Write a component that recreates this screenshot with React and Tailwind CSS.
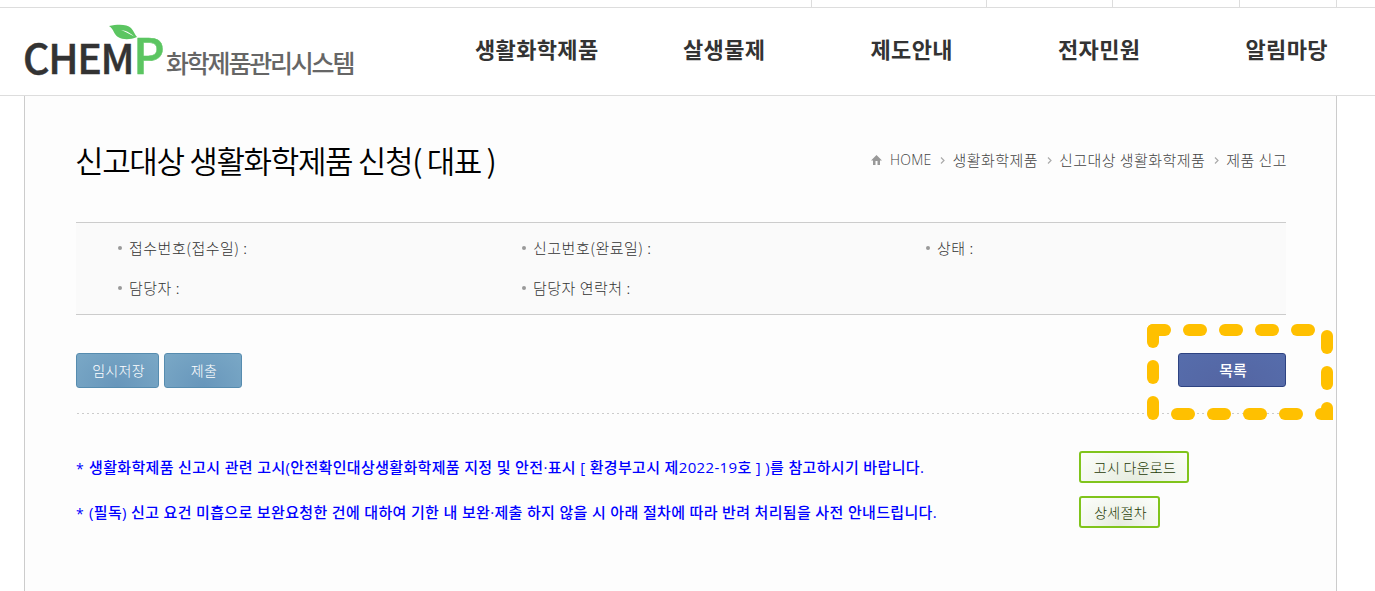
const navItems = ['살생물제', '제도안내', '전자민원', '알림마당']

const topCells = ['w-[175px]', 'w-[126px]', 'w-[127px]', 'w-[97px]', 'w-[39px]']

const crumbs = [
  { label: '생활화학제품', gap: 'mr-[9px]' },
  { label: '신고대상 생활화학제품', gap: 'mr-[9px]' },
  { label: '제품 신고', gap: '' },
]

const infoItems = ['접수번호(접수일) :', '신고번호(완료일) :', '상태 :', '담당자 :', '담당자 연락처 :']

const notices = [
  {
    text: '생활화학제품 신고시 관련 고시(안전확인대상생활화학제품 지정 및 안전·표시 [ 환경부고시 제2022-19호 ] )를 참고하시기 바랍니다.',
    button: '고시 다운로드',
    width: 'w-[110px]',
  },
  {
    text: '(필독) 신고 요건 미흡으로 보완요청한 건에 대하여 기한 내 보완·제출 하지 않을 시 아래 절차에 따라 반려 처리됨을 사전 안내드립니다.',
    button: '상세절차',
    width: 'w-[81px]',
  },
]

// x, y, width, height of each stroke in the highlight frame
const dashes = [
  [0, 0, 24, 12], [36, 0, 24, 12], [72, 0, 24, 12], [108, 0, 24, 12], [144, 0, 24, 12],
  [0, 0, 12, 24], [0, 36, 12, 24], [0, 72, 12, 24],
  [174, 6, 12, 24], [174, 42, 12, 24], [174, 78, 12, 18],
  [24, 84, 24, 12], [60, 84, 24, 12], [96, 84, 24, 12], [132, 84, 24, 12], [168, 84, 18, 12],
]

function Logo() {
  return (
    <div className="relative flex h-[87px] w-[340px] whitespace-nowrap">
      <span className="mt-[18px] -ml-px w-[110px] text-[41px] leading-[60px] font-medium tracking-[-1.3px] text-[#333] [-webkit-text-stroke:0.5px_#333]">CHEM</span>
      <span className="mt-[15px] w-[33px] text-[49px] leading-[60px] font-medium text-[#5bc561] [-webkit-text-stroke:0.5px_#5bc561]">P</span>
      <span className="mt-[37px] text-[25px] leading-[34px] font-medium tracking-[-2.2px] text-[#666]">화학제품관리시스템</span>
      <svg className="absolute top-[16px] left-[85px]" width="30" height="17" viewBox="0 0 30 17">
        <path d="M0 2C9 0 18 0 22 4c3 3 4 7 6 9-7 3-14 3-19 0C5 11 5 5 0 2Z" fill="#5bc561" />
        <path d="M12 6c7 1 10 4 14 7-5-3-9-5-14-7Z" fill="#fff" />
      </svg>
    </div>
  )
}

function Header() {
  return (
    <header>
      <div className="flex h-2 justify-end border-b border-[#ddd]">
        {topCells.map((width) => (
          <div key={width} className={`${width} border-l border-[#ddd]`} />
        ))}
      </div>
      <div className="flex h-[88px] border-b border-[#ddd] pl-6">
        <Logo />
        <nav className="ml-[111px] flex pt-[23px] text-[22px] leading-[34px] font-bold tracking-[0.35px] whitespace-nowrap text-[#333]">
          <a className="w-[208px]">생활화학제품</a>
          {navItems.map((label) => (
            <a key={label} className="w-[187.5px] last:w-auto">{label}</a>
          ))}
        </nav>
      </div>
    </header>
  )
}

function Breadcrumb() {
  return (
    <div className="-mr-px flex items-center text-[15px] leading-[22px] font-light text-[#444]">
      <svg className="mr-[8px]" width="11" height="10" viewBox="0 0 11 10">
        <path d="M5.5 0 11 5.5H9V10H6.5V6h-2v4H2V5.5H0Z" fill="#999" />
      </svg>
      <span className="mr-[9px] font-['Open_Sans'] text-[14px] tracking-[0.2px]">HOME</span>
      {crumbs.map(({ label, gap }) => (
        <span key={label} className={`flex items-center ${gap}`}>
          <svg className="mr-[7px]" width="5" height="7" viewBox="0 0 5 7">
            <path d="m1 .5 3 3-3 3" fill="none" stroke="#aaa" strokeWidth="1.2" />
          </svg>
          <span className="tracking-[0.45px]">{label}</span>
        </span>
      ))}
    </div>
  )
}

function HighlightFrame() {
  return (
    <svg className="pointer-events-none absolute -top-[29px] -right-[47px]" width="186" height="96" viewBox="0 0 186 96">
      {dashes.map(([x, y, w, h]) => (
        <rect key={`${x}-${y}-${w}`} x={x} y={y} width={w} height={h} rx="6" fill="#ffc000" />
      ))}
      <path d="M180 84h6v12h-6Z" fill="#ffc000" />
    </svg>
  )
}

function BlueButton({ width, children }) {
  return (
    <button className={`${width} h-[35px] rounded-[3px] border border-[#568caf] bg-radial-[at_50%_100%] from-[#6796bb] to-[#7aa8c6] pl-[2px] text-[14px] font-light tracking-[0.3px] text-white`}>
      {children}
    </button>
  )
}

function GreenButton({ width, children }) {
  return (
    <button className={`${width} h-8 rounded-[3px] border-2 border-[#80c41c] bg-radial-[at_50%_100%] from-[#e6ecdf] to-[#fcfefb] pt-px pl-[2px] text-[14px] font-light tracking-[0.3px] whitespace-nowrap text-[#263b05]`}>
      {children}
    </button>
  )
}

function App() {
  return (
    <div className="h-[591px] w-[1375px] overflow-hidden bg-white font-['Noto_Sans_CJK_KR',sans-serif]">
      <Header />
      <main className="ml-6 h-[495px] w-[1313px] border-x border-[#ccc] bg-[#fdfdfd] pr-[50px] pl-[51px]">

        <div className="flex h-[126px] items-start justify-between">
          <h1 className="mt-[41px] -ml-px text-[31px] leading-[46px] font-[350] tracking-[-1.35px] whitespace-nowrap text-black">
            신고대상 생활화학제품 신청( 대표 )
          </h1>
          <div className="mt-[53px]"><Breadcrumb /></div>
        </div>

        {/* 접수 정보 */}
        <ul className="grid h-[93px] grid-cols-[404px_404px_1fr] grid-rows-[40px_40px] border-y border-[#ccc] bg-[#fafafa] pt-[5px] text-[15px] font-light tracking-[0.5px] text-[#333]">
          {infoItems.map((item) => (
            <li key={item} className="flex items-center pl-[42px]">
              <span className="mr-[7px] size-1 rounded-full bg-[#999]" />
              {item}
            </li>
          ))}
        </ul>

        <div className="relative mt-[38px] flex h-[60px] items-start justify-between">
          <div className="flex gap-[5px]">
            <BlueButton width="w-[83px]">임시저장</BlueButton>
            <BlueButton width="w-[78px]">제출</BlueButton>
          </div>
          <button className="h-[34px] w-[108px] rounded-[3px] border border-[#2e4382] bg-radial-[at_50%_100%] from-[#5465a2] to-[#566dac] pl-[2px] text-[15px] font-medium text-white">
            목록
          </button>
          <HighlightFrame />
        </div>
        <div className="ml-px h-px bg-[repeating-linear-gradient(90deg,#ccc_0_2px,transparent_2px_5px)]" />

        {/* 안내 문구 */}
        <div className="mt-[37px] flex flex-col gap-[13px]">
          {notices.map(({ text, button, width }) => (
            <div key={button} className="flex h-8 items-center">
              <p className="flex w-[1003px] pt-[2px] font-['Open_Sans','Noto_Sans_CJK_KR',sans-serif] text-[15px] leading-[22px] font-medium tracking-[0.34px] whitespace-nowrap text-[#00f]">
                <span className="w-[13px] pt-[2px] text-[14px]">*</span>
                <span>{text}</span>
              </p>
              <GreenButton width={width}>{button}</GreenButton>
            </div>
          ))}
        </div>

      </main>
    </div>
  )
}

export default App
